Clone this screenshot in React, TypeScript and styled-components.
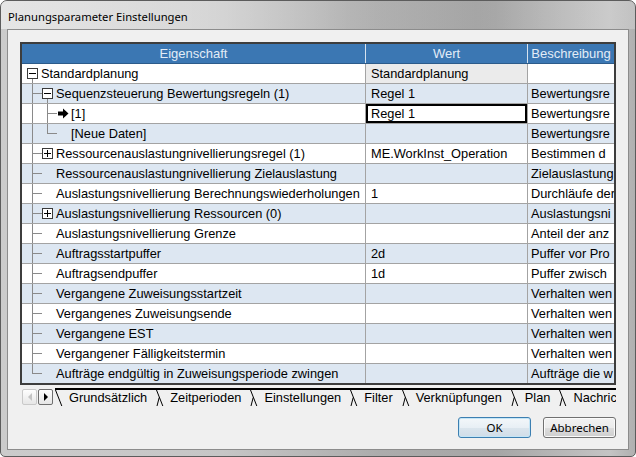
import React from 'react'
import styled, { createGlobalStyle } from 'styled-components'

const GlobalStyle = createGlobalStyle`
  html, body {
    margin: 0;
    padding: 0;
    background: #ffffff;
  }
  body {
    font-family: "Liberation Sans", Arial, sans-serif;
  }
`

const Window = styled.div`
  width: 636px;
  height: 457px;
  box-sizing: border-box;
  display: flex;
  flex-direction: column;
  padding: 0 6px 6px 6px;
  border: 1px solid #5c5c5c;
  border-radius: 7px 7px 5px 5px;
  background: linear-gradient(90deg, #cbcbcb 0%, #c6c6c6 35%, #acacac 60%, #a6a6a6 78%, #c4c4c4 96%, #b0b0b0 100%);
  overflow: hidden;
`

const TitleBar = styled.div`
  height: 28px;
  display: flex;
  align-items: center;
  margin: 0 -6px;
  padding: 0 7px;
  background: linear-gradient(90deg, rgba(236,236,236,0.8) 0%, rgba(228,228,228,0.6) 30%, rgba(190,190,190,0.3) 55%, rgba(160,160,160,0.2) 75%, rgba(220,220,220,0.4) 100%);
`

const Title = styled.span`
  font-family: "Noto Sans", "Open Sans", sans-serif;
  font-size: 11.25px;
  color: #000000;
  margin-top: 2px;
`

const Client = styled.div`
  flex: 1;
  display: flex;
  flex-direction: column;
  background: #f0f0f0;
  border: 1px solid #8c8c8c;
  padding: 12px 12px 0 12px;
`

const Grid = styled.div`
  border: 2px solid #3d3d3d;
  background: #ffffff;
  font-size: 12.8px;
  color: #000000;
`

const HeadRow = styled.div`
  display: flex;
  height: 19px;
  border-bottom: 1px solid #2c5b8a;
  background: #3b77b3;
`

const HeadCell = styled.div<{ $w?: number }>`
  ${({ $w }) => ($w ? `width: ${$w}px;` : 'flex: 1;')}
  flex-shrink: 0;
  line-height: 19px;
  text-align: center;
  font-size: 13px;
  color: #e2ecf7;
  white-space: nowrap;
  overflow: hidden;
  border-right: 1px solid #d6e2ee;
  &:last-child {
    border-right: none;
  }
`

const Row = styled.div<{ $alt: boolean; $last: boolean }>`
  display: flex;
  height: 19px;
  border-bottom: ${({ $last }) => ($last ? 'none' : '1px solid #a3a3a3')};
  background: ${({ $alt }) => ($alt ? '#dde7f2' : '#ffffff')};
`

const PropCell = styled.div`
  width: 343px;
  flex-shrink: 0;
  display: flex;
  align-items: stretch;
  border-right: 1px solid #a3a3a3;
  white-space: nowrap;
  overflow: hidden;
`

const Label = styled.span`
  line-height: 19px;
`

const ValueCell = styled.div<{ $readonly?: boolean; $editing?: boolean }>`
  width: 156px;
  flex-shrink: 0;
  padding-left: 5px;
  line-height: 19px;
  border-right: 1px solid #a3a3a3;
  white-space: nowrap;
  overflow: hidden;
  background: ${({ $readonly, $editing }) => ($editing ? '#ffffff' : $readonly ? '#ebebeb' : 'transparent')};
  box-shadow: ${({ $editing }) => ($editing ? 'inset 0 0 0 2px #000000' : 'none')};
`

const DescCell = styled.div`
  flex: 1;
  padding-left: 3px;
  line-height: 19px;
  white-space: nowrap;
  overflow: hidden;
`

const TabStrip = styled.div`
  display: flex;
  height: 18px;
  margin-top: 3px;
  font-size: 12.8px;
`

const ScrollGroup = styled.div`
  display: flex;
  gap: 1px;
  padding: 1px 2px 0 2px;
  width: 31px;
`

const ScrollButton = styled.div<{ $disabled?: boolean }>`
  width: 13px;
  height: 14px;
  border: 1px solid ${({ $disabled }) => ($disabled ? '#c9c9c9' : '#6f6f6f')};
  border-radius: 2px;
  background: linear-gradient(#fefefe, #e6e6e6);
  display: flex;
  align-items: center;
  justify-content: center;
`

const TabBar = styled.div`
  flex: 1;
  display: flex;
  border-top: 2px solid #000000;
  overflow: hidden;
  white-space: nowrap;
`

const TabLabel = styled.span`
  line-height: 16px;
  padding: 0 9px 0 6px;
  color: #000000;
`

const ButtonRow = styled.div`
  display: flex;
  justify-content: flex-end;
  gap: 12px;
  margin-top: 11px;
`

const DialogButton = styled.button<{ $primary?: boolean }>`
  width: 73px;
  height: 21px;
  padding: 0;
  font-family: "Noto Sans", "Open Sans", sans-serif;
  font-size: 11.5px;
  color: #000000;
  border-radius: 3px;
  border: 1px solid ${({ $primary }) => ($primary ? '#3c7fb1' : '#707070')};
  background: ${({ $primary }) =>
    $primary
      ? 'linear-gradient(#f3f7fa 0%, #e8eff5 50%, #dbe5ed 51%, #d0dde8 100%)'
      : 'linear-gradient(#f2f2f2 0%, #ebebeb 50%, #dddddd 51%, #cfcfcf 100%)'};
  box-shadow: inset 0 0 0 1px ${({ $primary }) => ($primary ? '#c4e5f6' : '#fbfbfb')};
`

type Toggle = 'minus' | 'plus'

interface Item {
  label: string
  value?: string
  desc?: string
  level: 0 | 1 | 2
  toggle?: Toggle
  arrow?: boolean
  last?: boolean
  readonly?: boolean
  editing?: boolean
}

const items: Item[] = [
  { label: 'Standardplanung', value: 'Standardplanung', level: 0, toggle: 'minus', readonly: true },
  { label: 'Sequenzsteuerung Bewertungsregeln (1)', value: 'Regel 1', desc: 'Bewertungsre', level: 1, toggle: 'minus' },
  { label: '[1]', value: 'Regel 1', desc: 'Bewertungsre', level: 2, arrow: true, editing: true },
  { label: '[Neue Daten]', desc: 'Bewertungsre', level: 2, last: true },
  { label: 'Ressourcenauslastungnivellierungsregel (1)', value: 'ME.WorkInst_Operation', desc: 'Bestimmen d', level: 1, toggle: 'plus' },
  { label: 'Ressourcenauslastungnivellierung Zielauslastung', desc: 'Zielauslastung', level: 1 },
  { label: 'Auslastungsnivellierung Berechnungswiederholungen', value: '1', desc: 'Durchläufe der', level: 1 },
  { label: 'Auslastungsnivellierung Ressourcen (0)', desc: 'Auslastungsni', level: 1, toggle: 'plus' },
  { label: 'Auslastungsnivellierung Grenze', desc: 'Anteil der anz', level: 1 },
  { label: 'Auftragsstartpuffer', value: '2d', desc: 'Puffer vor Pro', level: 1 },
  { label: 'Auftragsendpuffer', value: '1d', desc: 'Puffer zwisch', level: 1 },
  { label: 'Vergangene Zuweisungsstartzeit', desc: 'Verhalten wen', level: 1 },
  { label: 'Vergangenes Zuweisungsende', desc: 'Verhalten wen', level: 1 },
  { label: 'Vergangene EST', desc: 'Verhalten wen', level: 1 },
  { label: 'Vergangener Fälligkeitstermin', desc: 'Verhalten wen', level: 1 },
  { label: 'Aufträge endgültig in Zuweisungsperiode zwingen', desc: 'Aufträge die w', level: 1, last: true },
]

const tabs = ['Grundsätzlich', 'Zeitperioden', 'Einstellungen', 'Filter', 'Verknüpfungen', 'Plan', 'Nachrich']

const LINE = '#8a8a8a'

const ToggleBox = ({ x, kind }: { x: number; kind: Toggle }) => (
  <g>
    <rect x={x + 0.5} y={4.5} width={10} height={10} fill="#ffffff" stroke="#3a3a3a" />
    <line x1={x + 2} y1={9.5} x2={x + 9} y2={9.5} stroke="#000000" />
    {kind === 'plus' && <line x1={x + 5.5} y1={6} x2={x + 5.5} y2={13} stroke="#000000" />}
  </g>
)

const TreeGuides = ({ item }: { item: Item }) => {
  const width = 19 + item.level * 15
  return (
    <svg width={width} height={19} style={{ flexShrink: 0 }}>
      {item.level === 0 && (
        <>
          <line x1={10.5} y1={15} x2={10.5} y2={19} stroke={LINE} />
          {item.toggle && <ToggleBox x={5} kind={item.toggle} />}
        </>
      )}
      {item.level === 1 && (
        <>
          <line x1={10.5} y1={0} x2={10.5} y2={item.last ? 10 : 19} stroke={LINE} />
          <line x1={11} y1={9.5} x2={20} y2={9.5} stroke={LINE} />
          {item.toggle && <ToggleBox x={20} kind={item.toggle} />}
          {item.toggle === 'minus' && <line x1={25.5} y1={15} x2={25.5} y2={19} stroke={LINE} />}
        </>
      )}
      {item.level === 2 && (
        <>
          <line x1={10.5} y1={0} x2={10.5} y2={19} stroke={LINE} />
          <line x1={25.5} y1={0} x2={25.5} y2={item.last ? 10 : 19} stroke={LINE} />
          <line x1={26} y1={9.5} x2={35} y2={9.5} stroke={LINE} />
          {item.arrow && (
            <polygon points="36,7.5 41,7.5 41,4.5 46.5,9.5 41,14.5 41,11.5 36,11.5" fill="#000000" />
          )}
        </>
      )}
    </svg>
  )
}

const TabSeparator = ({ first }: { first?: boolean }) => (
  <svg width={8} height={16} style={{ flexShrink: 0 }}>
    <line x1={0.5} y1={0} x2={6.8} y2={16} stroke="#000000" />
    {!first && <line x1={3.2} y1={7.5} x2={1} y2={16} stroke="#000000" />}
  </svg>
)

const App: React.FC = () => {
  return (
    <>
      <GlobalStyle />
      <Window>
        <TitleBar>
          <Title>Planungsparameter Einstellungen</Title>
        </TitleBar>
        <Client>
          <Grid>
            <HeadRow>
              <HeadCell $w={343}>Eigenschaft</HeadCell>
              <HeadCell $w={161}>Wert</HeadCell>
              <HeadCell>Beschreibung</HeadCell>
            </HeadRow>
            {items.map((item, index) => (
              <Row key={index} $alt={index % 2 === 1} $last={index === items.length - 1}>
                <PropCell>
                  <TreeGuides item={item} />
                  <Label>{item.label}</Label>
                </PropCell>
                <ValueCell $readonly={item.readonly} $editing={item.editing}>
                  {item.value}
                </ValueCell>
                <DescCell>{item.desc}</DescCell>
              </Row>
            ))}
          </Grid>
          <TabStrip>
            <ScrollGroup>
              <ScrollButton $disabled>
                <svg width={6} height={8}>
                  <polygon points="5,0 5,8 1,4" fill="#c4c4c4" />
                </svg>
              </ScrollButton>
              <ScrollButton>
                <svg width={6} height={8}>
                  <polygon points="1,0 1,8 5,4" fill="#000000" />
                </svg>
              </ScrollButton>
            </ScrollGroup>
            <TabBar>
              {tabs.map((tab, index) => (
                <React.Fragment key={tab}>
                  <TabSeparator first={index === 0} />
                  <TabLabel>{tab}</TabLabel>
                </React.Fragment>
              ))}
            </TabBar>
          </TabStrip>
          <ButtonRow>
            <DialogButton $primary>OK</DialogButton>
            <DialogButton>Abbrechen</DialogButton>
          </ButtonRow>
        </Client>
      </Window>
    </>
  )
}

export default App
